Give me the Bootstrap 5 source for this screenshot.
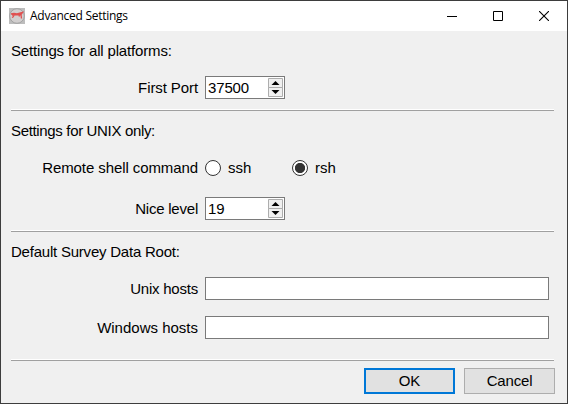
<!DOCTYPE html>
<html lang="en">
<head>
<meta charset="utf-8">
<meta name="viewport" content="width=device-width, initial-scale=1">
<title>Advanced Settings</title>
<link href="https://cdn.jsdelivr.net/npm/bootstrap@5.3.0/dist/css/bootstrap.min.css" rel="stylesheet">
<style>
html, body { height: 100%; overflow: hidden; }
body { font: 15px/20px "Liberation Sans", Arial, sans-serif; color: #000; background: #3d3d3d; }
.dialog { height: 404px; padding: 1px; background: #3d3d3d; }
.dialog-body { background: #f0f0f0; }
.titlebar { height: 30px; background: #fff; padding-left: 8px; }
.title-text { font: 12px/16px "Open Sans", "Noto Sans", sans-serif; margin-left: 5px; letter-spacing: -.27px; }
.caption-btn { width: 46px; height: 30px; padding: 0; border: 0; background: none; }
.caption-btn svg { display: block; margin: auto; }
.heading { height: 20px; margin: 10px 0 15px 10px; }
.field { height: 23px; }
.field + .field { margin-top: 16px; }
.field + .nice { margin-top: 18px; }
.field-label { width: 197px; text-align: right; margin-right: 7px; }
.rule { height: 2px; margin: 10px 13px 0 10px; border-top: 1px solid #fff; border-bottom: 1px solid #a0a0a0; flex: none; }
.rule.last { margin-top: 20px; }
.box, .box:focus { height: 23px; min-height: 0; padding: 0 1px 0 2px; border: 1px solid #7a7a7a; border-radius: 0; background: #fff; color: #000; font: inherit; box-shadow: none; }
.spin { width: 80px; letter-spacing: -.15px; }
.path-box { width: 344px; }
.choice { width: 87px; }
.choice .form-check-input { width: 16px; height: 16px; margin: 0 7px 0 0; border: 1px solid #333; background: #fff; box-shadow: none; }
.choice .form-check-input:checked { background: radial-gradient(circle, #333 4.7px, #fff 5.5px); }
.actions { margin: 7px 12px 0 0; gap: 9px; }
.action, .action:hover { width: 91px; height: 26px; padding: 0; border: 1px solid #adadad; border-radius: 0; background: #e1e1e1; color: #000; font: inherit; }
.action.default { border: 2px solid #0078d7; }
.tight-1 { letter-spacing: -.09px; }
.tight-2 { letter-spacing: -.16px; }
.tight-3 { letter-spacing: -.22px; }
.tight-4 { letter-spacing: -.34px; }
</style>
</head>
<body>
<div class="dialog d-flex flex-column">
  <header class="titlebar d-flex align-items-center">
    <svg width="16" height="16" viewBox="0 0 16 16">
      <rect width="16" height="16" fill="#bdbdbd"/>
      <circle cx="8" cy="8" r="7.3" fill="#d2cfcf" stroke="#989898" stroke-width=".8"/>
      <path d="M2 6 5 5.5 8 6 13.5 4.5 12 6.5 12.5 10.500M3 7.200 7 6.800 12 6.500M5 7.500 4 9 3 9.500M10 7.500 10.500 8.500" fill="none" stroke="#e05050" stroke-width="1.3"/>
    </svg>
    <span class="title-text">Advanced Settings</span>
    <div class="d-flex ms-auto">
      <button class="caption-btn" aria-label="Minimize"><svg width="10" height="10"><path d="M0 5.5h10" stroke="#000"/></svg></button>
      <button class="caption-btn" aria-label="Maximize"><svg width="10" height="10"><path d="M.5.5h9v9h-9z" fill="none" stroke="#000"/></svg></button>
      <button class="caption-btn" aria-label="Close"><svg width="10" height="10"><path d="M0 0 10 10M10 0 0 10" stroke="#000" stroke-width="1.1"/></svg></button>
    </div>
  </header>
  <main class="dialog-body flex-grow-1 d-flex flex-column">
    <div class="heading tight-2">Settings for all platforms:</div>
    <div class="field d-flex align-items-center">
      <label class="field-label tight-1">First Port</label>
      <div class="spin box d-flex align-items-center"><span>37500</span>
        <svg class="ms-auto" width="15" height="19"><path d="M.5.5h14v9h-14zM.5 9.5h14v9h-14z" fill="#f0f0f0" stroke="#adadad"/><path d="M7.5 3 11.5 7h-8zM3.500 12h8l-4 4z"/></svg></div>
    </div>
    <div class="rule"></div>
    <div class="heading tight-4">Settings for UNIX only:</div>
    <div class="field d-flex align-items-center">
      <label class="field-label tight-1">Remote shell command</label>
      <label class="choice d-flex align-items-center"><input class="form-check-input" type="radio" name="shell">ssh</label>
      <label class="choice d-flex align-items-center"><input class="form-check-input" type="radio" name="shell" checked>rsh</label>
    </div>
    <div class="field nice d-flex align-items-center">
      <label class="field-label tight-3">Nice level</label>
      <div class="spin box d-flex align-items-center"><span>19</span>
        <svg class="ms-auto" width="15" height="19"><path d="M.5.5h14v9h-14zM.5 9.5h14v9h-14z" fill="#f0f0f0" stroke="#adadad"/><path d="M7.5 3 11.5 7h-8zM3.500 12h8l-4 4z"/></svg></div>
    </div>
    <div class="rule"></div>
    <div class="heading tight-3">Default Survey Data Root:</div>
    <div class="field d-flex align-items-center">
      <label class="field-label tight-3">Unix hosts</label><input class="form-control box path-box" type="text">
    </div>
    <div class="field d-flex align-items-center">
      <label class="field-label">Windows hosts</label><input class="form-control box path-box" type="text">
    </div>
    <div class="rule last"></div>
    <div class="actions d-flex justify-content-end">
      <button class="btn action default">OK</button>
      <button class="btn action tight-2">Cancel</button>
    </div>
  </main>
</div>
<script src="https://cdn.jsdelivr.net/npm/bootstrap@5.3.0/dist/js/bootstrap.bundle.min.js"></script>
</body>
</html>
